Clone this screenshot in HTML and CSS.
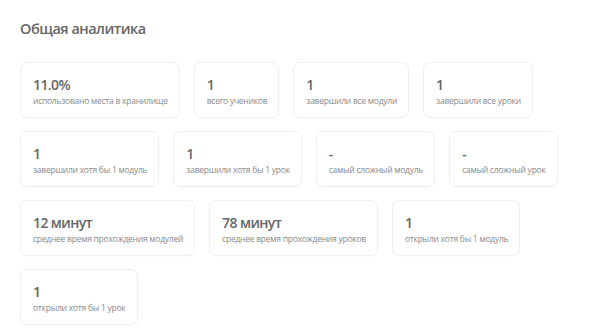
FILE: index.html
```html
<!DOCTYPE html>
<html lang="ru">
<head>
<meta charset="utf-8">
<link rel="stylesheet" href="styles.css">
</head>
<body>
<div class="page">
  <h2 class="title">Общая аналитика</h2>
  <div class="cards">
    <div class="card"><div class="value">11.0%</div><div class="label">использовано места в хранилище</div></div>
    <div class="card"><div class="value">1</div><div class="label">всего учеников</div></div>
    <div class="card"><div class="value">1</div><div class="label">завершили все модули</div></div>
    <div class="card"><div class="value">1</div><div class="label">завершили все уроки</div></div>
    <div class="card"><div class="value">1</div><div class="label">завершили хотя бы 1 модуль</div></div>
    <div class="card"><div class="value">1</div><div class="label">завершили хотя бы 1 урок</div></div>
    <div class="card"><div class="value">-</div><div class="label">самый сложный модуль</div></div>
    <div class="card"><div class="value">-</div><div class="label">самый сложный урок</div></div>
    <div class="card"><div class="value">12 минут</div><div class="label">среднее время прохождения модулей</div></div>
    <div class="card"><div class="value">78 минут</div><div class="label">среднее время прохождения уроков</div></div>
    <div class="card"><div class="value">1</div><div class="label">открыли хотя бы 1 модуль</div></div>
    <div class="card"><div class="value">1</div><div class="label">открыли хотя бы 1 урок</div></div>
  </div>
</div>
</body>
</html>
```
FILE: styles.css
```css
html, body {
  margin: 0;
  padding: 0;
  background: #ffffff;
}
body {
  font-family: "Open Sans", "Noto Sans", sans-serif;
  color: #555;
}
.page {
  padding: 19px 20px 0 20px;
}
.title {
  margin: 0;
  font-size: 14.5px;
  line-height: 20px;
  font-weight: 600;
  letter-spacing: -0.5px;
  color: #666;
}
.cards {
  margin-top: 23px;
  display: flex;
  flex-wrap: wrap;
  column-gap: 14px;
  row-gap: 13px;
  max-width: 545px;
}
.card {
  border: 1px solid #efefef;
  border-radius: 7px;
  padding: 13px 11px 10px 12px;
  box-shadow: 0 1px 2px rgba(0,0,0,0.02);
}
.value {
  font-size: 14px;
  line-height: 18px;
  font-weight: 600;
  letter-spacing: -0.6px;
  color: #666;
}
.label {
  font-size: 8.5px;
  line-height: 13px;
  letter-spacing: -0.25px;
  color: #8a8a8a;
  white-space: nowrap;
}
```
